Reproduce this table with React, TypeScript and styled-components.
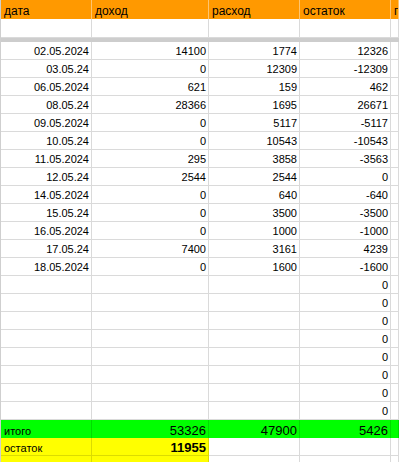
import React from 'react';
import styled, {createGlobalStyle, css} from 'styled-components';

type Tone = 'plain' | 'header' | 'green' | 'yellow';

interface IEntry {
    date: string,
    income: string,
    expense: string,
    balance: string
}

const entries: IEntry[] = [
    {date: '02.05.2024', income: '14100', expense: '1774', balance: '12326'},
    {date: '03.05.24', income: '0', expense: '12309', balance: '-12309'},
    {date: '06.05.2024', income: '621', expense: '159', balance: '462'},
    {date: '08.05.24', income: '28366', expense: '1695', balance: '26671'},
    {date: '09.05.2024', income: '0', expense: '5117', balance: '-5117'},
    {date: '10.05.24', income: '0', expense: '10543', balance: '-10543'},
    {date: '11.05.2024', income: '295', expense: '3858', balance: '-3563'},
    {date: '12.05.24', income: '2544', expense: '2544', balance: '0'},
    {date: '14.05.2024', income: '0', expense: '640', balance: '-640'},
    {date: '15.05.24', income: '0', expense: '3500', balance: '-3500'},
    {date: '16.05.2024', income: '0', expense: '1000', balance: '-1000'},
    {date: '17.05.24', income: '7400', expense: '3161', balance: '4239'},
    {date: '18.05.2024', income: '0', expense: '1600', balance: '-1600'},
];

const emptyRows = 8;

const fills: Record<Tone, string> = {
    plain: '#ffffff',
    header: '#ff9900',
    green: '#00ff00',
    yellow: '#ffff00',
};

const lines: Record<Tone, string> = {
    plain: '#dadada',
    header: '#ffc46e',
    green: '#00dc00',
    yellow: '#dcdc00',
};

function App() {
    return (
        <>
            <GlobalStyle/>
            <Sheet>
                <Row $height={19}>
                    <Cell $tone="header" $size={12} $pad={2} $noBottom>дата</Cell>
                    <Cell $tone="header" $size={12} $pad={2} $noBottom>доход</Cell>
                    <Cell $tone="header" $size={12} $pad={2} $noBottom>расход</Cell>
                    <Cell $tone="header" $size={12} $pad={2} $noBottom>остаток</Cell>
                    <Cell $tone="header" $size={12} $pad={2} $noBottom>п</Cell>
                </Row>
                <Row $height={19}>
                    <Cell/><Cell/><Cell/><Cell/><Cell/>
                </Row>
                <FreezeBar/>
                {entries.map((e, i) => (
                    <Row key={e.date + i} $height={18}>
                        <Cell $right>{e.date}</Cell>
                        <Cell $right>{e.income}</Cell>
                        <Cell $right>{e.expense}</Cell>
                        <Cell $right>{e.balance}</Cell>
                        <Cell/>
                    </Row>
                ))}
                {Array.from({length: emptyRows}).map((_, i) => (
                    <Row key={'empty' + i} $height={18}>
                        <Cell/><Cell/><Cell/>
                        <Cell $right>0</Cell>
                        <Cell/>
                    </Row>
                ))}
                <Row $height={18}>
                    <Cell $tone="green" $pad={1} $noBottom>итого</Cell>
                    <Cell $tone="green" $size={13} $pad={1} $right $noBottom>53326</Cell>
                    <Cell $tone="green" $size={13} $pad={1} $right $noBottom>47900</Cell>
                    <Cell $tone="green" $size={13} $pad={1} $right $noBottom>5426</Cell>
                    <Cell $tone="green" $noBottom/>
                </Row>
                <Row $height={18}>
                    <Cell $tone="yellow" $pad={1}>остаток</Cell>
                    <Cell $tone="yellow" $size={13} $pad={1} $right $bold>11955</Cell>
                    <Cell/><Cell/><Cell/>
                </Row>
                <Row $height={18}>
                    <Cell $tone="yellow"/>
                    <Cell $tone="yellow"/>
                    <Cell/><Cell/><Cell/>
                </Row>
            </Sheet>
        </>
    );
}

const GlobalStyle = createGlobalStyle`
  html, body {
    margin: 0;
    padding: 0;
    background: #ffffff;
    overflow: hidden;
  }
  body {
    font-family: "Liberation Sans", Arial, sans-serif;
    color: #000000;
  }
`;

const Sheet = styled.div`
  display: flex;
  flex-direction: column;
  width: 399px;
  height: 462px;
  overflow: hidden;
  border-left: 1px solid #cfcfcf;
  box-sizing: border-box;
`;

const Row = styled.div<{ $height: number }>`
  display: grid;
  grid-template-columns: 91px 117px 91px 91px 1fr;
  height: ${p => p.$height}px;
  flex: 0 0 auto;
`;

const FreezeBar = styled.div`
  height: 4px;
  flex: 0 0 auto;
  background: #cdcdcd;
`;

const Cell = styled.div<{
    $tone?: Tone,
    $right?: boolean,
    $size?: number,
    $pad?: number,
    $bold?: boolean,
    $noBottom?: boolean
}>`
  ${({$tone = 'plain', $noBottom}) => css`
    background: ${fills[$tone]};
    border-right: 1px solid ${lines[$tone]};
    border-bottom: ${$noBottom ? 'none' : `1px solid ${lines[$tone]}`};
  `}
  box-sizing: border-box;
  display: flex;
  align-items: flex-end;
  justify-content: ${p => (p.$right ? 'flex-end' : 'flex-start')};
  padding: 0 ${p => (p.$right ? '2px' : '0')} ${p => p.$pad ?? 2}px ${p => (p.$right ? '0' : '3px')};
  font-size: ${p => p.$size ?? 11}px;
  font-weight: ${p => (p.$bold ? 700 : 400)};
  line-height: 1;
  white-space: nowrap;
  overflow: hidden;
`;

export default App;
